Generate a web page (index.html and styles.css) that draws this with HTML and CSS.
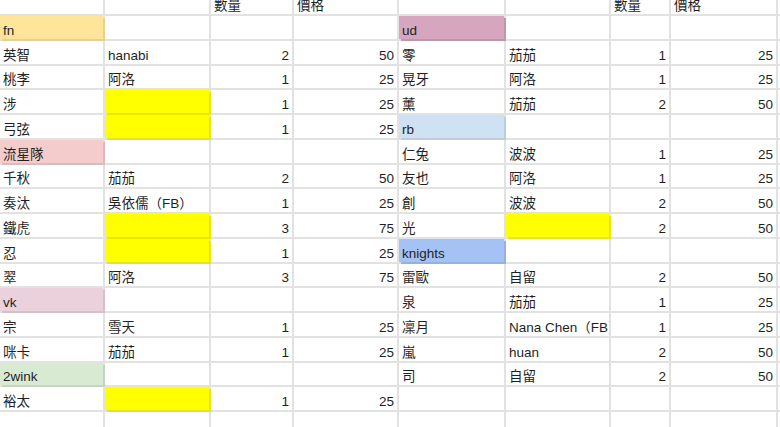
FILE: index.html
```html
<!DOCTYPE html>
<html lang="zh-Hant">
<head>
<meta charset="utf-8">
<title>Sheet</title>
<link rel="stylesheet" href="styles.css">
</head>
<body>
<div class="sheet">
  <div class="c"></div><div class="c"></div><div class="c">數量</div><div class="c">價格</div><div class="c"></div><div class="c"></div><div class="c">數量</div><div class="c">價格</div><div class="c"></div>

  <div class="c tag fn">fn</div><div class="c"></div><div class="c"></div><div class="c"></div><div class="c tag ud">ud</div><div class="c"></div><div class="c"></div><div class="c"></div><div class="c"></div>

  <div class="c">英智</div><div class="c">hanabi</div><div class="c n">2</div><div class="c n">50</div><div class="c">零</div><div class="c">茄茄</div><div class="c n">1</div><div class="c n">25</div><div class="c"></div>

  <div class="c">桃李</div><div class="c">阿洛</div><div class="c n">1</div><div class="c n">25</div><div class="c">晃牙</div><div class="c">阿洛</div><div class="c n">1</div><div class="c n">25</div><div class="c"></div>

  <div class="c">涉</div><div class="c tag y"></div><div class="c n">1</div><div class="c n">25</div><div class="c">薰</div><div class="c">茄茄</div><div class="c n">2</div><div class="c n">50</div><div class="c"></div>

  <div class="c">弓弦</div><div class="c tag y"></div><div class="c n">1</div><div class="c n">25</div><div class="c tag rb">rb</div><div class="c"></div><div class="c"></div><div class="c"></div><div class="c"></div>

  <div class="c tag ryu">流星隊</div><div class="c"></div><div class="c"></div><div class="c"></div><div class="c">仁兔</div><div class="c">波波</div><div class="c n">1</div><div class="c n">25</div><div class="c"></div>

  <div class="c">千秋</div><div class="c">茄茄</div><div class="c n">2</div><div class="c n">50</div><div class="c">友也</div><div class="c">阿洛</div><div class="c n">1</div><div class="c n">25</div><div class="c"></div>

  <div class="c">奏汰</div><div class="c">吳依儒（FB）</div><div class="c n">1</div><div class="c n">25</div><div class="c">創</div><div class="c">波波</div><div class="c n">2</div><div class="c n">50</div><div class="c"></div>

  <div class="c">鐵虎</div><div class="c tag y"></div><div class="c n">3</div><div class="c n">75</div><div class="c">光</div><div class="c tag y"></div><div class="c n">2</div><div class="c n">50</div><div class="c"></div>

  <div class="c">忍</div><div class="c tag y"></div><div class="c n">1</div><div class="c n">25</div><div class="c tag kn">knights</div><div class="c"></div><div class="c"></div><div class="c"></div><div class="c"></div>

  <div class="c">翠</div><div class="c">阿洛</div><div class="c n">3</div><div class="c n">75</div><div class="c">雷歐</div><div class="c">自留</div><div class="c n">2</div><div class="c n">50</div><div class="c"></div>

  <div class="c tag vk">vk</div><div class="c"></div><div class="c"></div><div class="c"></div><div class="c">泉</div><div class="c">茄茄</div><div class="c n">1</div><div class="c n">25</div><div class="c"></div>

  <div class="c">宗</div><div class="c">雪天</div><div class="c n">1</div><div class="c n">25</div><div class="c">凜月</div><div class="c">Nana Chen（FB）</div><div class="c n">1</div><div class="c n">25</div><div class="c"></div>

  <div class="c">咪卡</div><div class="c">茄茄</div><div class="c n">1</div><div class="c n">25</div><div class="c">嵐</div><div class="c">huan</div><div class="c n">2</div><div class="c n">50</div><div class="c"></div>

  <div class="c tag tw">2wink</div><div class="c"></div><div class="c"></div><div class="c"></div><div class="c">司</div><div class="c">自留</div><div class="c n">2</div><div class="c n">50</div><div class="c"></div>

  <div class="c">裕太</div><div class="c tag y"></div><div class="c n">1</div><div class="c n">25</div><div class="c"></div><div class="c"></div><div class="c"></div><div class="c"></div><div class="c"></div>

  <div class="c"></div><div class="c"></div><div class="c"></div><div class="c"></div><div class="c"></div><div class="c"></div><div class="c"></div><div class="c"></div><div class="c"></div>
</div>
</body>
</html>
```

FILE: styles.css
```css
html, body {
  margin: 0;
  padding: 0;
  background: #ffffff;
  overflow: hidden;
}

.sheet {
  display: grid;
  grid-template-columns: 103px 104px 81px 103px 105px 103px 58px 105px 1fr;
  grid-template-rows: 14px;
  grid-auto-rows: 22.75px;
  gap: 2px;
  background: #e2e2e2;
  width: 780px;
  height: 427px;
  overflow: hidden;
  font-family: "Liberation Sans", Arial, "Noto Sans CJK TC", sans-serif;
  font-size: 13.5px;
  color: #1f1f1f;
}

.c {
  background: #ffffff;
  display: flex;
  align-items: flex-end;
  padding: 0 3px 1px 3px;
  line-height: 15px;
  white-space: nowrap;
  overflow: hidden;
  min-width: 0;
}

.n {
  justify-content: flex-end;
}

.tag {
  position: relative;
  overflow: visible;
  z-index: 1;
}

.fn { background: #ffe599; box-shadow: 2px 2px 0 0 #ead08a; }
.ud { background: #d5a6bd; box-shadow: 2px 2px 0 0 #c295ab; }
.ryu { background: #f4cccc; box-shadow: 2px 2px 0 0 #dfb9b9; }
.vk { background: #ead1dc; box-shadow: 2px 2px 0 0 #d6bfc9; }
.tw { background: #d9ead3; box-shadow: 2px 2px 0 0 #c5d6bf; }
.rb { background: #cfe2f3; box-shadow: 2px 2px 0 0 #bccde0; }
.kn { background: #a4c2f4; box-shadow: 2px 2px 0 0 #95b1e0; }
.y { background: #ffff00; box-shadow: 2px 2px 0 0 #e8e800; }
```
